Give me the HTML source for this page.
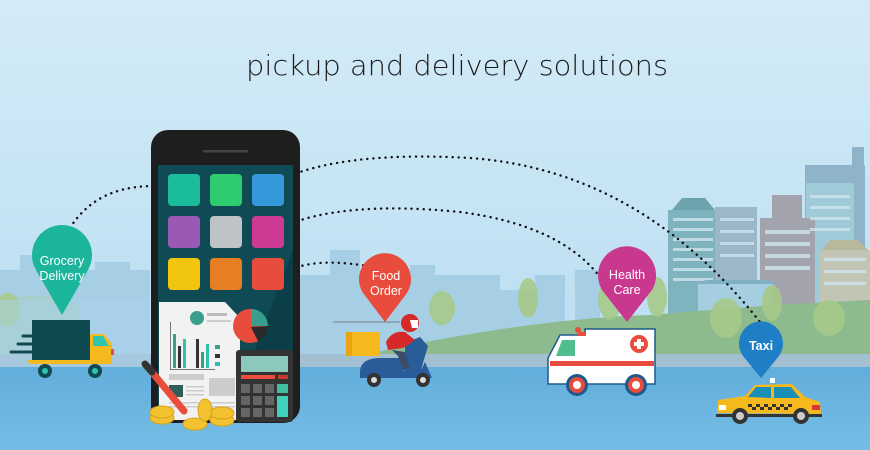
<!DOCTYPE html>
<html><head><meta charset="utf-8"><style>
html,body{margin:0;padding:0;width:870px;height:450px;overflow:hidden}
svg{display:block}
</style></head><body>
<svg width="870" height="450" viewBox="0 0 870 450" xmlns="http://www.w3.org/2000/svg">
<defs>
<linearGradient id="sky" x1="0" y1="0" x2="0" y2="1">
<stop offset="0" stop-color="#d4ebf7"/><stop offset="1" stop-color="#b4dbf0"/></linearGradient>
<linearGradient id="water" x1="0" y1="0" x2="0" y2="1">
<stop offset="0" stop-color="#62aedb"/><stop offset="1" stop-color="#74bde6"/></linearGradient>
</defs>
<rect width="870" height="450" fill="url(#sky)"/>
<g fill="#a6cfe6">
<rect x="0" y="270" width="150" height="100"/><rect x="20" y="255" width="30" height="30"/><rect x="95" y="262" width="35" height="20"/>
<rect x="300" y="275" width="200" height="95"/><rect x="330" y="250" width="30" height="30"/><rect x="410" y="265" width="25" height="20"/>
<rect x="535" y="275" width="30" height="80"/><rect x="575" y="270" width="25" height="85"/><rect x="485" y="290" width="50" height="65"/>
</g>
<g>
<rect x="805" y="165" width="60" height="150" fill="#8fb3c8"/><rect x="852" y="147" width="12" height="30" fill="#8fb3c8"/>
<rect x="806" y="183" width="48" height="120" fill="#9fcbd9"/>
<rect x="668" y="210" width="50" height="110" fill="#7fb3bd"/><polygon points="672,210 682,198 705,198 715,210" fill="#6ea3ad"/>
<rect x="715" y="207" width="42" height="110" fill="#9bb7c8"/>
<rect x="760" y="218" width="55" height="100" fill="#a3a3ad"/><rect x="772" y="195" width="30" height="25" fill="#a3a3ad"/>
<rect x="820" y="250" width="50" height="70" fill="#c2c4b4"/><polygon points="822,250 830,240 858,240 868,250" fill="#b8b89c"/>
<g fill="#cfe6ef" opacity=".8">
<rect x="673" y="218" width="40" height="3"/><rect x="673" y="228" width="40" height="3"/><rect x="673" y="238" width="40" height="3"/><rect x="673" y="248" width="40" height="3"/><rect x="673" y="258" width="40" height="3"/><rect x="673" y="268" width="40" height="3"/><rect x="673" y="278" width="40" height="3"/>
<rect x="720" y="218" width="34" height="3"/><rect x="720" y="230" width="34" height="3"/><rect x="720" y="242" width="34" height="3"/><rect x="720" y="254" width="34" height="3"/>
<rect x="765" y="230" width="45" height="4"/><rect x="765" y="242" width="45" height="4"/><rect x="765" y="254" width="45" height="4"/><rect x="765" y="266" width="45" height="4"/>
<rect x="810" y="195" width="40" height="3"/><rect x="810" y="206" width="40" height="3"/><rect x="810" y="217" width="40" height="3"/><rect x="810" y="228" width="40" height="3"/>
<rect x="824" y="258" width="42" height="3"/><rect x="824" y="270" width="42" height="3"/><rect x="824" y="282" width="42" height="3"/>
</g>
<rect x="698" y="282" width="75" height="35" fill="#a5cfe0"/><polygon points="695,284 706,280 768,280 778,284" fill="#7fb0c3"/>
</g>
<path d="M300,370 Q500,320 650,315 Q760,305 870,300 L870,368 L300,368 Z" fill="#8dbb8e"/>
<path d="M0,300 Q40,290 80,305 L80,368 L0,368 Z" fill="#a6cfb3" opacity=".6"/>
<g fill="#a7c98a" opacity=".9">
<ellipse cx="442" cy="308" rx="13" ry="17"/><ellipse cx="528" cy="298" rx="10" ry="20"/><ellipse cx="610" cy="300" rx="12" ry="20"/>
<ellipse cx="657" cy="297" rx="10" ry="20"/><ellipse cx="726" cy="318" rx="16" ry="20"/><ellipse cx="772" cy="303" rx="10" ry="18"/><ellipse cx="829" cy="318" rx="16" ry="18"/>
<ellipse cx="8" cy="310" rx="12" ry="17"/>
</g>
<rect x="0" y="354" width="870" height="14" fill="#a3c0d3"/>
<rect x="0" y="367" width="870" height="83" fill="url(#water)"/>
<rect x="0" y="300" width="150" height="67" fill="#a9d2ea" opacity=".5"/>

<text x="457" y="75" text-anchor="middle" font-family="DejaVu Sans, Liberation Sans, sans-serif" font-weight="200" font-size="28" fill="#1c1c1c" textLength="422" lengthAdjust="spacingAndGlyphs">pickup and delivery solutions</text>

<g fill="none" stroke="#111" stroke-width="2.4" stroke-linecap="round" stroke-dasharray="0.1 6">
<path d="M70,228 Q100,180 170,187"/>
<path d="M268,186 Q330,150 470,158 Q640,170 760,322"/>
<path d="M280,228 Q340,200 460,212 Q560,225 600,277"/>
<path d="M276,280 Q300,255 367,266"/>
</g>

<rect x="151" y="130" width="149" height="293" rx="17" fill="#1e1e1e"/>
<rect x="203" y="150" width="45" height="2.5" rx="1" fill="#444"/>
<rect x="158" y="165" width="135" height="250" fill="#0f4a55"/>
<polygon points="230,415 293,250 293,415" fill="#0b3e47"/>
<g>
<rect x="168" y="174" width="32" height="32" rx="4" fill="#1abc9c"/><rect x="210" y="174" width="32" height="32" rx="4" fill="#2ecc71"/><rect x="252" y="174" width="32" height="32" rx="4" fill="#3498db"/>
<rect x="168" y="216" width="32" height="32" rx="4" fill="#9b59b6"/><rect x="210" y="216" width="32" height="32" rx="4" fill="#bdc3c7"/><rect x="252" y="216" width="32" height="32" rx="4" fill="#cc3a93"/>
<rect x="168" y="258" width="32" height="32" rx="4" fill="#f1c40f"/><rect x="210" y="258" width="32" height="32" rx="4" fill="#e67e22"/><rect x="252" y="258" width="32" height="32" rx="4" fill="#e74c3c"/>
</g>
<path d="M159,302 L225,302 L240,318 L240,420 L159,420 Z" fill="#f2f2f2"/>
<circle cx="197" cy="318" r="7" fill="#3a9e8c"/>
<rect x="207" y="313" width="20" height="3" fill="#bbb"/><rect x="207" y="320" width="24" height="2" fill="#ccc"/>
<rect x="170" y="322" width="1" height="48" fill="#777"/><rect x="170" y="369" width="45" height="1" fill="#777"/>
<rect x="173" y="334" width="3" height="34" fill="#3a9e8c"/><rect x="178" y="346" width="3" height="22" fill="#333"/><rect x="183" y="339" width="3" height="29" fill="#2fc1a9"/>
<rect x="196" y="339" width="3" height="29" fill="#333"/><rect x="201" y="352" width="3" height="16" fill="#3a9e8c"/><rect x="206" y="344" width="3" height="24" fill="#2fc1a9"/>
<rect x="215" y="345" width="5" height="4" fill="#3a9e8c"/><rect x="215" y="354" width="5" height="4" fill="#333"/><rect x="215" y="362" width="5" height="4" fill="#2fc1a9"/>
<rect x="169" y="374" width="35" height="6" fill="#ccc"/><rect x="169" y="385" width="14" height="12" fill="#2e5e55"/>
<rect x="209" y="378" width="26" height="18" fill="#ccc"/>
<g fill="#ccc"><rect x="186" y="386" width="18" height="1.5"/><rect x="186" y="390" width="18" height="1.5"/><rect x="186" y="394" width="18" height="1.5"/><rect x="169" y="402" width="66" height="1.5"/><rect x="169" y="406" width="66" height="1.5"/></g>
<circle cx="250" cy="326" r="17" fill="#e74c3c"/>
<path d="M251,309 A17,17 0 0 1 268,326 L251,326 Z" fill="#3a9e8c"/>
<path d="M268,326 A17,17 0 0 1 258,341 L251,327 Z" fill="#2a2a2a"/>
<rect x="236" y="350" width="57" height="72" rx="3" fill="#333"/>
<rect x="241" y="356" width="47" height="16" fill="#8cc9bd"/>
<rect x="241" y="375" width="34" height="4" fill="#e74c3c"/><rect x="278" y="375" width="10" height="4" fill="#c0392b"/>
<g fill="#666"><rect x="241" y="384" width="9" height="9"/><rect x="253" y="384" width="9" height="9"/><rect x="265" y="384" width="9" height="9"/>
<rect x="241" y="396" width="9" height="9"/><rect x="253" y="396" width="9" height="9"/><rect x="265" y="396" width="9" height="9"/>
<rect x="241" y="408" width="9" height="9"/><rect x="253" y="408" width="9" height="9"/><rect x="265" y="408" width="9" height="9"/></g>
<rect x="277" y="384" width="11" height="9" fill="#3fbf9f"/><rect x="277" y="396" width="11" height="21" fill="#3fd1bb"/>
<line x1="147" y1="366" x2="184" y2="411" stroke="#e74c3c" stroke-width="7" stroke-linecap="round"/>
<line x1="145" y1="364" x2="152" y2="372" stroke="#333" stroke-width="7" stroke-linecap="round"/>
<g fill="#f2c230" stroke="#d9a21a" stroke-width="1">
<ellipse cx="162" cy="418" rx="12" ry="6"/><ellipse cx="162" cy="412" rx="12" ry="6"/>
<ellipse cx="195" cy="424" rx="12" ry="6"/><ellipse cx="222" cy="420" rx="12" ry="6"/><ellipse cx="222" cy="413" rx="12" ry="6"/><ellipse cx="205" cy="410" rx="7" ry="11"/>
</g>

<path d="M62,315 L36,270 A30,30 0 1 1 88,270 Z" fill="#1bb59c"/>
<text x="62" y="265" text-anchor="middle" font-family="Liberation Sans, sans-serif" font-size="12.5" fill="#fff">Grocery</text>
<text x="62" y="280" text-anchor="middle" font-family="Liberation Sans, sans-serif" font-size="12.5" fill="#fff">Delivery</text>
<rect x="32" y="320" width="58" height="40" fill="#0e4a4f"/>
<g stroke="#0e4a4f" stroke-width="3" stroke-linecap="round"><line x1="23" y1="336" x2="32" y2="336"/><line x1="18" y1="344" x2="32" y2="344"/><line x1="11" y1="352" x2="32" y2="352"/></g>
<path d="M28,360 L28,362 L33,363 L112,363 L112,344 L104,334 L90,334 L90,360 Z" fill="#f5b91e"/>
<rect x="30" y="360" width="82" height="4" fill="#f5b91e"/>
<path d="M93,336 L103,336 L109,346 L93,346 Z" fill="#2ec4b0"/>
<rect x="111" y="349" width="3" height="6" fill="#e74c3c"/>
<circle cx="45" cy="371" r="7" fill="#0e4a4f"/><circle cx="45" cy="371" r="3" fill="#2ec4b0"/>
<circle cx="95" cy="371" r="7" fill="#0e4a4f"/><circle cx="95" cy="371" r="3" fill="#2ec4b0"/>

<path d="M385,322 L363,293 A26,26 0 1 1 407,293 Z" fill="#e74c3c"/>
<text x="386" y="280" text-anchor="middle" font-family="Liberation Sans, sans-serif" font-size="12.5" fill="#fff">Food</text>
<text x="386" y="295" text-anchor="middle" font-family="Liberation Sans, sans-serif" font-size="12.5" fill="#fff">Order</text>
<line x1="333" y1="322" x2="400" y2="322" stroke="#666" stroke-width="0.8"/>
<rect x="346" y="332" width="34" height="24" fill="#f5b91e"/><rect x="346" y="332" width="6" height="24" fill="#e8a510"/>
<path d="M360,370 Q362,358 380,358 L400,358 L405,372 L420,372 L425,362 L432,378 L360,378 Z" fill="#2a5c9a"/>
<path d="M405,343 L420,337 L428,346 L420,373 L405,373 Z" fill="#2a5c9a"/>
<path d="M386,342 Q392,330 405,332 L415,340 L403,348 L388,350 Z" fill="#d62a2a"/>
<path d="M392,350 L405,352 L410,368 L403,370 L398,356 Z" fill="#3b4d6b"/>
<circle cx="410" cy="323" r="9" fill="#d62a2a"/><path d="M410,320 L418,320 L418,328 L412,328 Z" fill="#fff"/>
<circle cx="374" cy="380" r="7" fill="#333"/><circle cx="374" cy="380" r="3" fill="#ddd"/>
<circle cx="423" cy="380" r="7" fill="#333"/><circle cx="423" cy="380" r="3" fill="#ddd"/>

<path d="M627,322 L602,290 A29,29 0 1 1 652,290 Z" fill="#c9388f"/>
<text x="627" y="279" text-anchor="middle" font-family="Liberation Sans, sans-serif" font-size="12.5" fill="#fff">Health</text>
<text x="627" y="294" text-anchor="middle" font-family="Liberation Sans, sans-serif" font-size="12.5" fill="#fff">Care</text>
<path d="M548,384 L548,358 L560,335 L585,335 L585,329 L655,329 L655,384 Z" fill="#fff" stroke="#1d5a8a" stroke-width="1.5"/>
<rect x="578" y="332" width="8" height="4" fill="#e74c3c"/><circle cx="578" cy="330" r="3" fill="#e74c3c"/>
<path d="M562,340 L575,340 L575,356 L556,356 Z" fill="#4fc08d"/>
<rect x="550" y="361" width="104" height="5" fill="#e74c3c"/>
<circle cx="639" cy="344" r="9" fill="#e74c3c"/><rect x="637" y="339" width="4" height="10" fill="#fff"/><rect x="634" y="342" width="10" height="4" fill="#fff"/>
<circle cx="577" cy="385" r="11" fill="#1d5a8a"/><circle cx="577" cy="385" r="8" fill="#e74c3c"/><circle cx="577" cy="385" r="4" fill="#fff"/>
<circle cx="636" cy="385" r="11" fill="#1d5a8a"/><circle cx="636" cy="385" r="8" fill="#e74c3c"/><circle cx="636" cy="385" r="4" fill="#fff"/>

<path d="M761,378 L743,356 A22,22 0 1 1 779,356 Z" fill="#1e7fc6"/>
<text x="761" y="350" text-anchor="middle" font-family="Liberation Sans, sans-serif" font-size="12.5" font-weight="bold" fill="#fff">Taxi</text>
<rect x="770" y="378" width="5" height="5" fill="#fff"/>
<path d="M717,413 L718,400 L745,396 L755,385 L792,384 L805,397 L820,402 L821,414 Z" fill="#f5b91e"/>
<path d="M748,397 L756,387 L771,387 L771,398 Z" fill="#1a8fb5"/><path d="M774,387 L791,387 L800,398 L774,398 Z" fill="#1a8fb5"/>
<g fill="#333"><rect x="748" y="404" width="4" height="3"/><rect x="756" y="404" width="4" height="3"/><rect x="764" y="404" width="4" height="3"/><rect x="772" y="404" width="4" height="3"/><rect x="780" y="404" width="4" height="3"/><rect x="788" y="404" width="4" height="3"/>
<rect x="752" y="407" width="4" height="3"/><rect x="760" y="407" width="4" height="3"/><rect x="768" y="407" width="4" height="3"/><rect x="776" y="407" width="4" height="3"/><rect x="784" y="407" width="4" height="3"/></g>
<rect x="719" y="405" width="7" height="5" fill="#fff"/><rect x="812" y="405" width="8" height="5" fill="#d33"/>
<rect x="716" y="414" width="106" height="3" fill="#333"/>
<circle cx="740" cy="416" r="8" fill="#333"/><circle cx="740" cy="416" r="4" fill="#ccc"/>
<circle cx="801" cy="416" r="8" fill="#333"/><circle cx="801" cy="416" r="4" fill="#ccc"/>
</svg>
</body></html>
